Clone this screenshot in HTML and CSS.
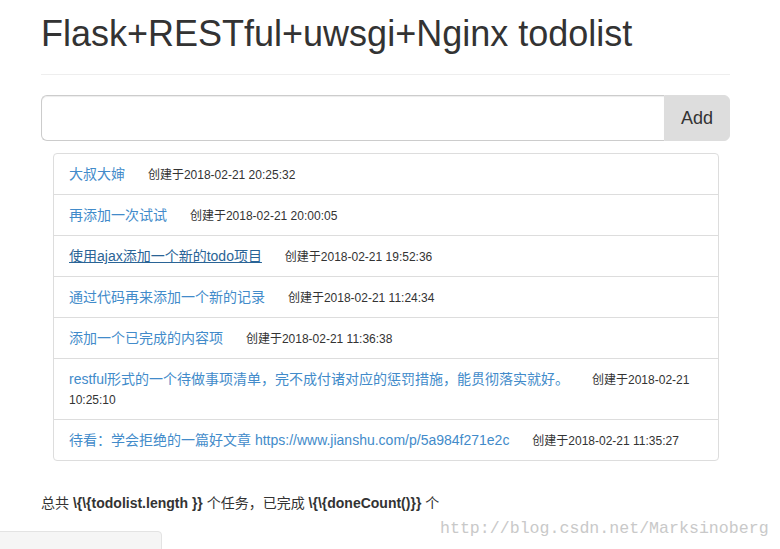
FILE: index.html
```html
<!DOCTYPE html>
<html lang="zh-CN">
<head>
    <meta charset="UTF-8" />
    <meta name="viewport" content="width=device-width, initial-scale=1.0"/>
    <title>Flask+RESTful+uwsgi+Nginx todolist</title>
    <link rel="stylesheet" href="styles.css">
</head>
<body>
    <div class="container">
        <h1 class="page-title">Flask+RESTful+uwsgi+Nginx todolist</h1>
        <hr class="divider">

        <div class="input-group">
            <input class="todo-input" type="text">
            <button class="add-button">Add</button>
        </div>

        <ul class="list-group">
            <li class="list-item">
                <a class="todo-link" href="#">大叔大婶</a>
                <span class="created">创建于2018-02-21 20:25:32</span>
            </li>
            <li class="list-item">
                <a class="todo-link" href="#">再添加一次试试</a>
                <span class="created">创建于2018-02-21 20:00:05</span>
            </li>
            <li class="list-item">
                <a class="todo-link hover" href="#">使用ajax添加一个新的todo项目</a>
                <span class="created">创建于2018-02-21 19:52:36</span>
            </li>
            <li class="list-item">
                <a class="todo-link" href="#">通过代码再来添加一个新的记录</a>
                <span class="created">创建于2018-02-21 11:24:34</span>
            </li>
            <li class="list-item">
                <a class="todo-link" href="#">添加一个已完成的内容项</a>
                <span class="created">创建于2018-02-21 11:36:38</span>
            </li>
            <li class="list-item">
                <a class="todo-link" href="#">restful形式的一个待做事项清单，完不成付诸对应的惩罚措施，能贯彻落实就好。</a>
                <span class="created">创建于2018-02-21 10:25:10</span>
            </li>
            <li class="list-item">
                <a class="todo-link" href="#">待看：学会拒绝的一篇好文章 https://www.jianshu.com/p/5a984f271e2c</a>
                <span class="created">创建于2018-02-21 11:35:27</span>
            </li>
        </ul>

        <p class="summary">
            总共 <strong>\{\{todolist.length }}</strong> 个任务，已完成 <strong>\{\{doneCount()}}</strong> 个
        </p>
    </div>

    <div class="bottom-tab"></div>
    <div class="watermark">http://blog.csdn.net/Marksinoberg</div>
</body>
</html>
```

FILE: styles.css
```css
* {
    margin: 0;
    padding: 0;
    box-sizing: border-box;
}

body {
    font-family: "Liberation Sans", Arial, "Noto Sans CJK SC", sans-serif;
    font-size: 14px;
    line-height: 20px;
    color: #333;
    background: #fff;
    height: 549px;
    overflow: hidden;
}

.container {
    width: 730px;
    padding: 0 0 0 41px;
}

.page-title {
    font-size: 36px;
    font-weight: 400;
    line-height: 40px;
    margin-top: 14px;
    color: #333;
}

.divider {
    border: 0;
    border-top: 1px solid #eee;
    margin: 20px 0 20px;
}

.input-group {
    display: flex;
    height: 46px;
}

.todo-input {
    flex: 1;
    height: 46px;
    border: 1px solid #ccc;
    border-right: 0;
    border-radius: 6px 0 0 6px;
    box-shadow: inset 0 1px 1px rgba(0, 0, 0, 0.075);
    font-size: 18px;
    padding: 10px 16px;
}

.add-button {
    width: 66px;
    height: 46px;
    border: 1px solid #ddd;
    border-radius: 0 6px 6px 0;
    background: #ddd;
    color: #333;
    font-family: inherit;
    font-size: 18px;
}

.list-group {
    list-style: none;
    margin: 12px 11px 0 12px;
}

.list-item {
    padding: 10px 15px;
    border: 1px solid #ddd;
    margin-bottom: -1px;
    background: #fff;
}

.list-item:first-child {
    border-radius: 4px 4px 0 0;
}

.list-item:last-child {
    border-radius: 0 0 4px 4px;
    margin-bottom: 0;
}

.todo-link {
    color: #428bca;
    text-decoration: none;
    line-height: 14px;
}

.todo-link.hover {
    color: #2a6496;
    text-decoration: underline;
}

.created {
    font-size: 12px;
    line-height: 12px;
    margin-left: 19px;
    color: #333;
}

.summary {
    margin-top: 32px;
    font-size: 14px;
}

.summary strong {
    font-weight: 700;
}

.bottom-tab {
    position: absolute;
    left: -1px;
    top: 531px;
    width: 163px;
    height: 30px;
    background: #f5f5f5;
    border: 1px solid #e3e3e3;
    border-radius: 0 4px 0 0;
}

.watermark {
    position: absolute;
    left: 440px;
    top: 517px;
    font-family: "Liberation Mono", "Courier New", monospace;
    font-size: 16.6px;
    line-height: 24px;
    color: #c9c9c9;
}
```
